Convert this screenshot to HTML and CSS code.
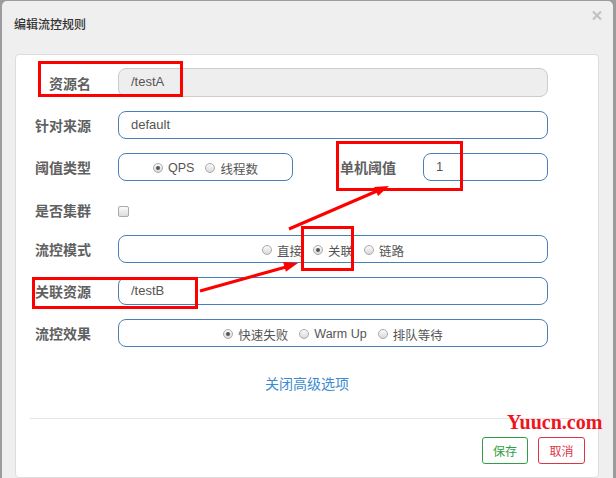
FILE: index.html
```html
<!DOCTYPE html>
<html lang="zh-CN">
    <head>
        <meta charset="UTF-8">
        <title>编辑流控规则</title>
        <link rel="stylesheet" href="styles.css">
    </head>
    <body>
        <div class="modal">
            <div class="modal-header">
                <h4 class="title">编辑流控规则</h4>
                <span class="close">
                    <svg width="10" height="9" viewBox="0 0 10 9"><path d="M1 0.5 L9 8.5 M9 0.5 L1 8.5" /></svg>
                </span>
            </div>
            <div class="panel">
                <div class="form">
                    <div class="row first">
                        <label class="label">资源名</label>
                        <div class="input disabled">/testA</div>
                    </div>
                    <div class="row">
                        <label class="label">针对来源</label>
                        <div class="input">default</div>
                    </div>
                    <div class="row">
                        <label class="label">阈值类型</label>
                        <div class="choice short">
                            <span class="radio checked"></span>QPS
                            <span class="radio"></span>线程数
                        </div>
                        <label class="label wide">单机阈值</label>
                        <div class="input small">1</div>
                    </div>
                    <div class="row check-row">
                        <label class="label">是否集群</label>
                        <span class="checkbox"></span>
                    </div>
                    <div class="row">
                        <label class="label">流控模式</label>
                        <div class="choice">
                            <span class="radio"></span>直接
                            <span class="radio checked"></span>关联
                            <span class="radio"></span>链路
                        </div>
                    </div>
                    <div class="row">
                        <label class="label">关联资源</label>
                        <div class="input">/testB</div>
                    </div>
                    <div class="row">
                        <label class="label">流控效果</label>
                        <div class="choice">
                            <span class="radio checked"></span>快速失败
                            <span class="radio"></span>Warm Up
                            <span class="radio"></span>排队等待
                        </div>
                    </div>
                </div>
                <div class="advanced"><a>关闭高级选项</a></div>
                <hr class="line">
                <div class="footer">
                    <button class="btn save">保存</button>
                    <button class="btn cancel">取消</button>
                </div>
            </div>
        </div>

        <div class="watermark">Yuucn.com</div>

        <svg class="marks" width="616" height="478" viewBox="0 0 616 478">
            <g fill="none" stroke="#f00" stroke-width="3">
                <rect x="39.5" y="62.5" width="142" height="33" />
                <rect x="337.5" y="142.5" width="124" height="47" />
                <rect x="302.5" y="227.5" width="50" height="42" />
                <rect x="33.5" y="278.5" width="163" height="29" />
                <line x1="200" y1="291" x2="286" y2="267" />
                <line x1="289" y1="229" x2="377" y2="191" />
            </g>
            <g fill="#f00">
                <polygon points="298,263 285.9,271.7 283.1,262.1" />
                <polygon points="389,186 378.1,196.1 374.1,186.9" />
            </g>
        </svg>
    </body>
</html>
```

FILE: styles.css
```css
html, body {
    margin: 0;
    padding: 0;
}

body {
    width: 616px;
    height: 478px;
    overflow: hidden;
    position: relative;
    background: #9c9c9c;
    font-family: "Liberation Sans", "Noto Sans CJK SC", sans-serif;
    color: #555;
}

.modal {
    margin: 1px 3px 0 2px;
    height: 477px;
    background: #efefef;
    border-radius: 5px 5px 0 0;
}

.modal-header {
    display: flex;
    align-items: flex-start;
    justify-content: space-between;
    padding: 16px 11px 0 12px;
    height: 37px;
}

.title {
    margin: 0;
    font-size: 12px;
    line-height: 17px;
    font-weight: 500;
    color: #333;
}

.close {
    margin-top: -6px;
    line-height: 0;
}

.close path {
    stroke: #c2c2c2;
    stroke-width: 2.2;
    fill: none;
}

.panel {
    margin: 0 14px 0 13px;
    height: 422px;
    background: #fff;
    border: 1px solid #ddd;
    border-radius: 4px;
}

.form {
    padding-top: 13px;
}

.row {
    display: flex;
    align-items: center;
    height: 28px;
    margin-bottom: 14px;
}

.row.first {
    height: 29px;
}

.row.check-row {
    height: 30px;
    margin-bottom: 10px;
}

.label {
    width: 75px;
    margin-right: 27px;
    padding-top: 2px;
    text-align: right;
    font-size: 14px;
    font-weight: 700;
    line-height: 20px;
    color: #606060;
}

.label.wide {
    width: 103px;
}

.input {
    box-sizing: border-box;
    width: 430px;
    height: 100%;
    padding: 0 12px;
    border: 1px solid #4a7fb6;
    border-radius: 8px;
    font-size: 13px;
    line-height: 26px;
    color: #555;
}

.input.disabled {
    background: #eee;
    border-color: #ccc;
}

.input.small {
    width: 125px;
}

.choice {
    box-sizing: border-box;
    width: 430px;
    height: 100%;
    display: flex;
    align-items: center;
    justify-content: center;
    padding-top: 2px;
    border: 1px solid #4a7fb6;
    border-radius: 8px;
    font-size: 12.5px;
    color: #555;
}

.choice.short {
    width: 175px;
}

.radio {
    position: relative;
    box-sizing: border-box;
    width: 10px;
    height: 10px;
    margin: 0 5px 0 11px;
    border: 1px solid #aaa;
    border-radius: 50%;
    background: linear-gradient(#fbfbfb, #d9d9d9);
}

.radio:first-child {
    margin-left: 0;
}

.radio.checked::after {
    content: "";
    position: absolute;
    left: 2px;
    top: 2px;
    width: 4px;
    height: 4px;
    border-radius: 50%;
    background: #555;
}

.checkbox {
    box-sizing: border-box;
    width: 11px;
    height: 11px;
    margin-top: 2px;
    border: 1px solid #aaa;
    border-radius: 2px;
    background: linear-gradient(#fbfbfb, #dcdcdc);
}

.advanced {
    padding-top: 13px;
    text-align: center;
    font-size: 14px;
    line-height: 20px;
}

.advanced a {
    color: #3d8ad0;
}

.line {
    margin: 24px 13px 0 14px;
    border: 0;
    border-top: 1px solid #e5e5e5;
}

.footer {
    display: flex;
    justify-content: flex-end;
    gap: 10px;
    padding: 18px 13px 0 0;
}

.btn {
    height: 27px;
    padding: 0;
    background: #fff;
    border: 1px solid;
    border-radius: 3px;
    font-family: "Liberation Sans", "Noto Sans CJK SC", sans-serif;
    font-size: 12px;
}

.btn.save {
    width: 46px;
    color: #2ea043;
    border-color: #2ea043;
}

.btn.cancel {
    width: 47px;
    color: #dc3545;
    border-color: #dc3545;
}

.watermark {
    position: absolute;
    left: 507px;
    top: 412px;
    font-family: "Liberation Serif", serif;
    font-size: 20px;
    font-weight: 700;
    line-height: 21px;
    color: #f0141e;
}

.marks {
    position: absolute;
    left: 0;
    top: 0;
    pointer-events: none;
}
```
